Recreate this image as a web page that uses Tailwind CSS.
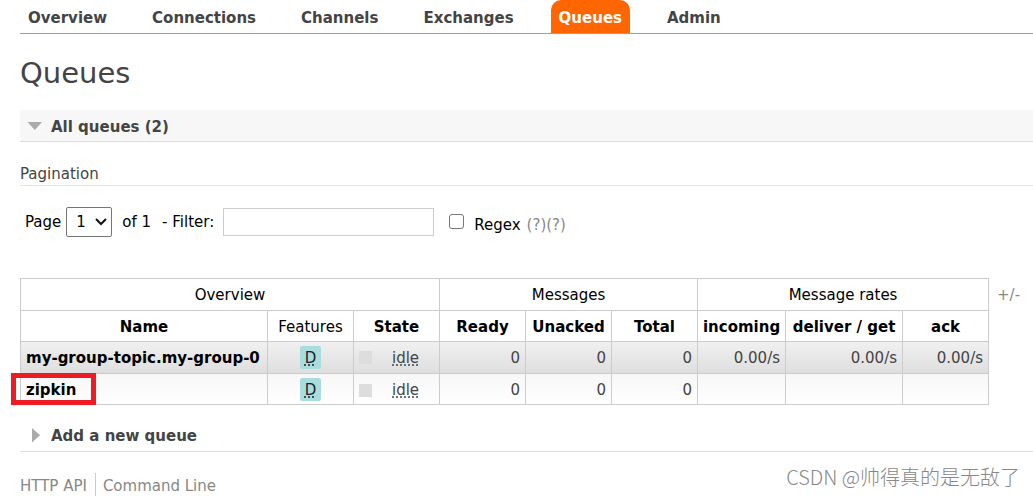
<!DOCTYPE html>
<html lang="en">
<head>
<meta charset="utf-8">
<title>Queues</title>
<script src="https://cdn.jsdelivr.net/npm/@tailwindcss/browser@4"></script>
</head>
<body class="relative min-h-screen overflow-x-hidden bg-white pl-5 font-['Verdana','DejaVu_Sans',sans-serif] text-[15px] leading-5 text-[#444]">
<nav class="border-b border-[#f88c16]">
  <ul class="flex gap-[29px] font-bold">
    <li><a href="#" class="block px-2 pt-2 pb-[5px]">Overview</a></li>
    <li><a href="#" class="block px-2 pt-2 pb-[5px]">Connections</a></li>
    <li><a href="#" class="block px-2 pt-2 pb-[5px]">Channels</a></li>
    <li><a href="#" class="block px-2 pt-2 pb-[5px]">Exchanges</a></li>
    <li><a href="#" class="block rounded-t-[10px] bg-[#f60] px-2 pt-2 pb-[5px] text-white">Queues</a></li>
    <li><a href="#" class="block px-2 pt-2 pb-[5px]">Admin</a></li>
  </ul>
</nav>
<main>
  <h1 class="mt-[19px] mb-[17px] text-[29px] leading-10">Queues</h1>
  <section>
    <h2 class="border-b border-[#ddd] bg-[#f7f7f7] font-bold">
      <button class="flex w-full items-center gap-2 pt-[7px] pb-1 pl-[7px] text-left">
        <svg class="h-4 w-4" viewBox="0 0 16 16"><path d="M0.500 3h14.500L7.750 11z" fill="#aaa"/></svg>
        All queues (2)
      </button>
    </h2>
    <h3 class="mt-[22px] border-b border-[#e4e4e4] pb-px">Pagination</h3>
    <form class="mt-5 flex h-8 items-center pl-[5px] text-black">
      <label for="page">Page</label>
      <span class="relative ml-[5px] flex">
        <select id="page" class="h-[30px] w-[46px] appearance-none rounded-[2px] border border-[#767676] bg-white pl-[9px]"><option>1</option></select>
        <svg class="pointer-events-none absolute top-[11px] right-[5px] h-2 w-3" viewBox="0 0 12 8"><path d="M1 1l5 5 5-5" fill="none" stroke="#111" stroke-width="2"/></svg>
      </span>
      <span class="ml-[10px]">of 1</span>
      <label for="filter" class="ml-[11px]">- Filter:</label>
      <input id="filter" type="text" class="ml-[9px] h-7 w-[211px] border border-[#ccc] px-1">
      <input id="regex" type="checkbox" class="mb-[2px] ml-[15px] h-[15px] w-[15px] appearance-none rounded-[3px] border border-[#767676] bg-white">
      <label for="regex" class="mt-[5px] ml-[10px]">Regex</label>
      <span class="mt-[5px] ml-[6px] text-[#888]"><a href="#">(?)</a><a href="#">(?)</a></span>
    </form>
    <div class="mt-10 flex items-start">
      <table class="w-[969px] shrink-0 table-fixed border-collapse text-right [&_td]:border [&_td]:border-[#ccc] [&_td]:px-[5px] [&_th]:border [&_th]:border-[#ccc]">
        <colgroup>
          <col class="w-[247px]"><col class="w-[86px]"><col class="w-[86px]"><col class="w-[86px]"><col class="w-[86px]"><col class="w-[86px]"><col class="w-[88px]"><col class="w-[117px]"><col class="w-[86px]">
        </colgroup>
        <thead class="text-center text-black">
          <tr class="h-8">
            <th class="font-normal" colspan="3">Overview</th>
            <th class="font-normal" colspan="3">Messages</th>
            <th class="font-normal" colspan="3">Message rates</th>
          </tr>
          <tr class="h-[31px] [&_th]:pt-[2px]">
            <th>Name</th><th class="font-normal">Features</th><th>State</th><th>Ready</th><th>Unacked</th><th>Total</th><th>incoming</th><th>deliver / get</th><th>ack</th>
          </tr>
        </thead>
        <tbody>
          <tr class="h-8 bg-linear-to-b from-[#f0f0f0] to-[#dedede]">
            <td class="text-left font-bold whitespace-nowrap text-black"><a href="#">my-group-topic.my-group-0</a></td>
            <td class="text-center"><span class="inline-block rounded-[2px] bg-[#a9dddd] px-[5px] pt-[2px] leading-[21px] text-[#222]"><abbr class="underline decoration-dotted underline-offset-2" title="durable">D</abbr></span></td>
            <td><div class="flex items-center gap-5"><span class="h-[13px] w-[13px] bg-[#ddd]"></span><abbr class="underline decoration-dotted underline-offset-2" title="idle">idle</abbr></div></td>
            <td>0</td><td>0</td><td>0</td><td>0.00/s</td><td>0.00/s</td><td>0.00/s</td>
          </tr>
          <tr class="h-[31px] bg-linear-to-b from-[#f7f7f7] to-white">
            <td class="relative pt-[2px] text-left font-bold text-black"><a href="#">zipkin</a><span class="absolute -top-px -left-[10px] h-8 w-[85px] border-5 border-[#ed1c24]"></span></td>
            <td class="text-center"><span class="inline-block rounded-[2px] bg-[#a9dddd] px-[5px] pt-[2px] leading-[21px] text-[#222]"><abbr class="underline decoration-dotted underline-offset-2" title="durable">D</abbr></span></td>
            <td class="pt-[2px]"><div class="flex items-center gap-5"><span class="h-[13px] w-[13px] bg-[#ddd]"></span><abbr class="underline decoration-dotted underline-offset-2" title="idle">idle</abbr></div></td>
            <td class="pt-[2px]">0</td><td class="pt-[2px]">0</td><td class="pt-[2px]">0</td><td></td><td></td><td></td>
          </tr>
        </tbody>
      </table>
      <button class="mt-[7px] ml-2 text-[#888]">+/-</button>
    </div>
  </section>
  <section>
    <h2 class="mt-[14px] border-b border-[#ddd] font-bold">
      <button class="flex w-full items-center gap-2 pt-[7px] pb-[5px] pl-[7px] text-left">
        <svg class="h-4 w-4" viewBox="0 0 16 16"><path d="M5 0v14.500L13 7.250z" fill="#aaa"/></svg>
        Add a new queue
      </button>
    </h2>
  </section>
</main>
<footer class="mt-[21px] flex text-[#888]">
  <a href="#" class="border-r border-[#ccc] pt-[3px] pr-2">HTTP API</a>
  <a href="#" class="pt-[3px] pl-[7px]">Command Line</a>
</footer>
<div class="absolute right-[13px] bottom-[6px] font-['Noto_Sans_CJK_SC',sans-serif] text-[20px] leading-7 font-light whitespace-nowrap text-[#888]">CSDN @帅得真的是无敌了</div>
</body>
</html>
